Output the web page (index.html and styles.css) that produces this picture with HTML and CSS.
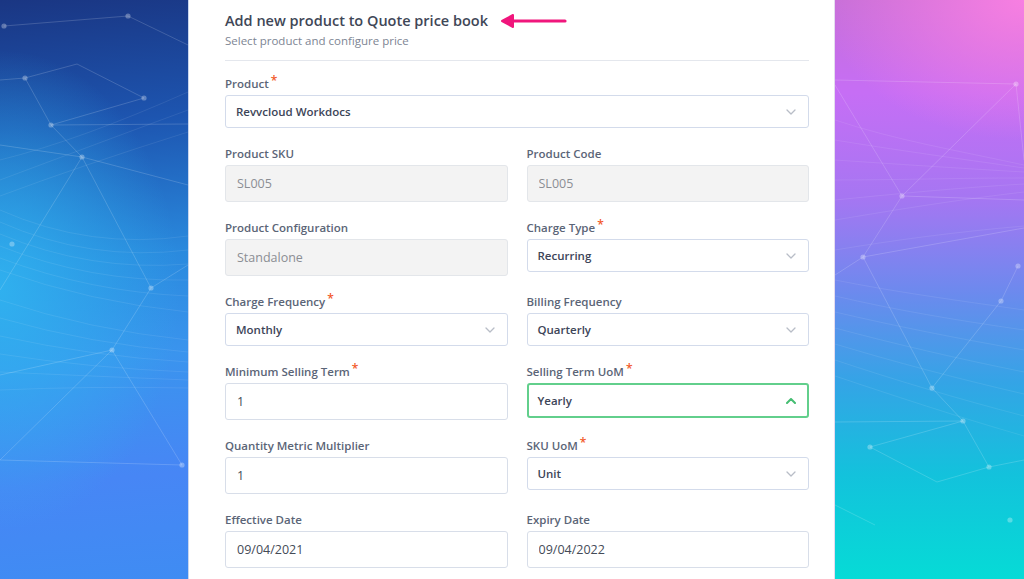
FILE: index.html
```html
<!DOCTYPE html>
<html lang="en">
<head>
    <meta charset="UTF-8">
    <meta name="viewport" content="width=device-width, initial-scale=1.0">
    <title>Add new product to Quote price book</title>
    <link rel="stylesheet" href="styles.css">
</head>
<body>

    <div class="side side-left">
        <svg class="net" viewBox="0 0 188 579" preserveAspectRatio="none">
            <g class="waves">
                <path d="M0 210 Q90 250 188 236"/>
                <path d="M0 222 Q90 262 188 250"/>
                <path d="M0 234 Q90 272 188 264"/>
                <path d="M0 246 Q90 282 188 280"/>
                <path d="M0 258 Q90 292 188 296"/>
                <path d="M0 270 Q90 302 188 312"/>
                <path d="M0 300 Q90 330 188 340"/>
                <path d="M0 318 Q90 344 188 352"/>
                <path d="M0 336 Q90 356 188 362"/>
                <path d="M0 354 Q90 368 188 372"/>
                <path d="M0 372 Q90 376 188 380"/>
                <path d="M0 390 Q90 386 188 388"/>
                <path d="M0 180 Q80 150 188 110"/>
                <path d="M0 196 Q80 166 188 132"/>
                <path d="M0 160 Q80 140 188 92"/>
            </g>
            <g class="lines">
                <path d="M4 26 L128 16 L188 45"/>
                <path d="M0 80 L25 78 L77 64 L144 98"/>
                <path d="M25 78 L51 125 L188 124"/>
                <path d="M144 98 L51 125"/>
                <path d="M0 145 L82 157 L188 185"/>
                <path d="M51 125 L82 157 L151 288 L112 350 L182 465"/>
                <path d="M82 157 L0 290"/>
                <path d="M151 288 L188 265"/>
                <path d="M112 350 L0 460 L182 465"/>
                <path d="M0 375 L112 350"/>
            </g>
            <g class="nodes">
                <circle cx="4" cy="26" r="2.6"/>
                <circle cx="128" cy="16" r="2.6"/>
                <circle cx="25" cy="78" r="2.6"/>
                <circle cx="144" cy="98" r="2.6"/>
                <circle cx="51" cy="125" r="2.6"/>
                <circle cx="82" cy="157" r="2.6"/>
                <circle cx="12" cy="244" r="2.6"/>
                <circle cx="151" cy="288" r="2.6"/>
                <circle cx="112" cy="350" r="2.6"/>
                <circle cx="182" cy="465" r="2.6"/>
            </g>
        </svg>
    </div>

    <main class="modal">
        <div class="modal-header">
            <div class="title-row">
                <h1>Add new product to Quote price book</h1>
                <svg class="pointer" width="68" height="16" viewBox="0 0 68 16">
                    <path d="M2 8 L13 2 L13 14 Z" fill="#f0167c" stroke="#f0167c" stroke-width="2" stroke-linejoin="round"/>
                    <line x1="12" y1="8" x2="65" y2="8" stroke="#f0167c" stroke-width="3.2" stroke-linecap="round"/>
                </svg>
            </div>
            <p class="subtitle">Select product and configure price</p>
        </div>

        <div class="form-grid">
            <div class="field field-wide">
                <label>Product<span class="req">*</span></label>
                <div class="select">
                    <span>Revvcloud Workdocs</span>
                    <svg class="chev" width="10" height="6" viewBox="0 0 10 6"><polyline points="1,1 5,5 9,1"/></svg>
                </div>
            </div>

            <div class="field">
                <label>Product SKU</label>
                <input class="input" type="text" value="SL005" readonly>
            </div>
            <div class="field">
                <label>Product Code</label>
                <input class="input" type="text" value="SL005" readonly>
            </div>

            <div class="field">
                <label>Product Configuration</label>
                <input class="input" type="text" value="Standalone" readonly>
            </div>
            <div class="field">
                <label>Charge Type<span class="req">*</span></label>
                <div class="select">
                    <span>Recurring</span>
                    <svg class="chev" width="10" height="6" viewBox="0 0 10 6"><polyline points="1,1 5,5 9,1"/></svg>
                </div>
            </div>

            <div class="field">
                <label>Charge Frequency<span class="req">*</span></label>
                <div class="select">
                    <span>Monthly</span>
                    <svg class="chev" width="10" height="6" viewBox="0 0 10 6"><polyline points="1,1 5,5 9,1"/></svg>
                </div>
            </div>
            <div class="field">
                <label>Billing Frequency</label>
                <div class="select">
                    <span>Quarterly</span>
                    <svg class="chev" width="10" height="6" viewBox="0 0 10 6"><polyline points="1,1 5,5 9,1"/></svg>
                </div>
            </div>

            <div class="field">
                <label>Minimum Selling Term<span class="req">*</span></label>
                <input class="input" type="text" value="1">
            </div>
            <div class="field">
                <label>Selling Term UoM<span class="req">*</span></label>
                <div class="select open">
                    <span>Yearly</span>
                    <svg class="chev" width="10" height="6" viewBox="0 0 10 6"><polyline points="1,5 5,1 9,5"/></svg>
                </div>
            </div>

            <div class="field">
                <label>Quantity Metric Multiplier</label>
                <input class="input" type="text" value="1">
            </div>
            <div class="field">
                <label>SKU UoM<span class="req">*</span></label>
                <div class="select">
                    <span>Unit</span>
                    <svg class="chev" width="10" height="6" viewBox="0 0 10 6"><polyline points="1,1 5,5 9,1"/></svg>
                </div>
            </div>

            <div class="field">
                <label>Effective Date</label>
                <input class="input" type="text" value="09/04/2021">
            </div>
            <div class="field">
                <label>Expiry Date</label>
                <input class="input" type="text" value="09/04/2022">
            </div>
        </div>
    </main>

    <div class="side side-right">
        <svg class="net" viewBox="0 0 189 579" preserveAspectRatio="none">
            <g class="waves">
                <path d="M0 120 C60 140 120 150 189 165"/>
                <path d="M0 140 C60 150 120 158 189 168"/>
                <path d="M0 160 C60 164 120 168 189 172"/>
                <path d="M0 180 C60 180 120 178 189 178"/>
                <path d="M0 200 C60 194 120 188 189 184"/>
                <path d="M0 220 C60 210 120 200 189 192"/>
                <path d="M0 250 C60 240 120 232 189 226"/>
                <path d="M0 280 C60 292 120 300 189 310"/>
                <path d="M0 296 C60 310 120 320 189 330"/>
                <path d="M0 312 C60 326 120 338 189 350"/>
                <path d="M0 328 C60 344 120 358 189 372"/>
                <path d="M0 344 C60 362 120 378 189 394"/>
                <path d="M0 360 C60 380 120 398 189 416"/>
                <path d="M0 376 C60 396 120 416 189 436"/>
            </g>
            <g class="lines">
                <path d="M0 80 L181 84 L189 160"/>
                <path d="M181 84 L67 196 L28 257 L0 275"/>
                <path d="M0 85 L67 196"/>
                <path d="M67 196 L189 200"/>
                <path d="M28 257 L97 388 L128 421 L35 447 L102 482 L154 467 L189 460"/>
                <path d="M28 257 L189 228"/>
                <path d="M183 266 L166 301 L97 388"/>
                <path d="M128 421 L154 467"/>
                <path d="M0 505 L40 525"/>
                <path d="M0 422 L128 421"/>
            </g>
            <g class="nodes">
                <circle cx="181" cy="84" r="2.6"/>
                <circle cx="67" cy="196" r="2.6"/>
                <circle cx="28" cy="257" r="2.6"/>
                <circle cx="183" cy="266" r="2.6"/>
                <circle cx="166" cy="301" r="2.6"/>
                <circle cx="97" cy="388" r="2.6"/>
                <circle cx="128" cy="421" r="2.6"/>
                <circle cx="35" cy="447" r="2.6"/>
                <circle cx="154" cy="467" r="2.6"/>
                <circle cx="175" cy="520" r="2.6"/>
            </g>
        </svg>
    </div>

</body>
</html>
```

FILE: styles.css
```css
* {
    margin: 0;
    padding: 0;
    box-sizing: border-box;
}

body {
    font-family: 'Open Sans', 'Noto Sans', sans-serif;
    display: flex;
    height: 100vh;
    overflow: hidden;
    color: #3f4757;
}

/* decorative background panels */
.side {
    height: 100%;
    overflow: hidden;
}

.side-left {
    width: 188px;
    background:
        radial-gradient(ellipse 180px 240px at 0 290px, rgba(48, 180, 240, 0.9), rgba(48, 180, 240, 0) 100%),
        linear-gradient(175deg, #1a3683 0%, #1d55b0 22%, #2a8ade 45%, #3a94ee 62%, #4786f5 82%, #3f8cf3 100%);
}

.side-right {
    flex: 1;
    background:
        radial-gradient(ellipse 200px 140px at 100% 0, rgba(250, 128, 226, 0.95), rgba(250, 128, 226, 0) 100%),
        linear-gradient(180deg, #c66fd8 0%, #c66ef5 16%, #a676f2 34%, #6e89ee 50%, #34a4e6 66%, #13c2dc 82%, #06dbd6 100%);
}

.net {
    display: block;
    width: 100%;
    height: 100%;
}

.net .waves path {
    fill: none;
    stroke: rgba(255, 255, 255, 0.14);
    stroke-width: 0.6;
}

.net .lines path {
    fill: none;
    stroke: rgba(255, 255, 255, 0.28);
    stroke-width: 0.6;
}

.net .nodes circle {
    fill: rgba(255, 255, 255, 0.3);
}

/* modal */
.modal {
    width: 647px;
    height: 100%;
    background: #fff;
    border-left: 1px solid #c9d6ee;
    border-right: 1px solid #e4dcef;
    padding: 12px 25px 0 36px;
}

.modal-header {
    border-bottom: 1px solid #e4e7ed;
    padding-bottom: 11px;
    margin-bottom: 15px;
}

.title-row {
    display: flex;
    align-items: center;
}

.title-row h1 {
    font-size: 14.5px;
    font-weight: 600;
    line-height: 18px;
    color: #3f4757;
}

.pointer {
    margin-left: 12px;
}

.subtitle {
    font-size: 11.5px;
    line-height: 16px;
    color: #7d8593;
    margin-top: 3px;
}

.form-grid {
    display: grid;
    grid-template-columns: 1fr 1fr;
    column-gap: 19px;
    row-gap: 18px;
    align-items: start;
}

.field-wide {
    grid-column: 1 / -1;
}

.field label {
    display: block;
    font-size: 11.5px;
    font-weight: 600;
    line-height: 16px;
    color: #5b6577;
    margin-bottom: 3px;
}

.req {
    position: relative;
    top: -3px;
    line-height: 0;
    color: #f2582a;
    font-size: 12px;
    margin-left: 2px;
}

.input {
    display: block;
    width: 100%;
    height: 37px;
    border: 1px solid #d8dee9;
    border-radius: 3px;
    padding: 0 11px;
    font-family: inherit;
    font-size: 12.5px;
    color: #444b57;
    background: #fff;
    outline: none;
}

.input[readonly] {
    background: #f3f3f3;
    border-color: #e3e6ea;
    color: #8b8e94;
}

.select {
    display: flex;
    align-items: center;
    justify-content: space-between;
    height: 33px;
    border: 1px solid #d3dbeb;
    border-radius: 3px;
    padding: 0 12px 0 10px;
    font-size: 11.5px;
    font-weight: 600;
    color: #3d4558;
}

.chev polyline {
    fill: none;
    stroke: #b8bdc7;
    stroke-width: 1.3;
    stroke-linecap: round;
    stroke-linejoin: round;
}

.select.open {
    height: 35px;
    border: 2px solid #62cf8c;
    padding: 0 11px 0 9px;
}

.select.open .chev polyline {
    stroke: #45bd72;
    stroke-width: 2;
}
```
